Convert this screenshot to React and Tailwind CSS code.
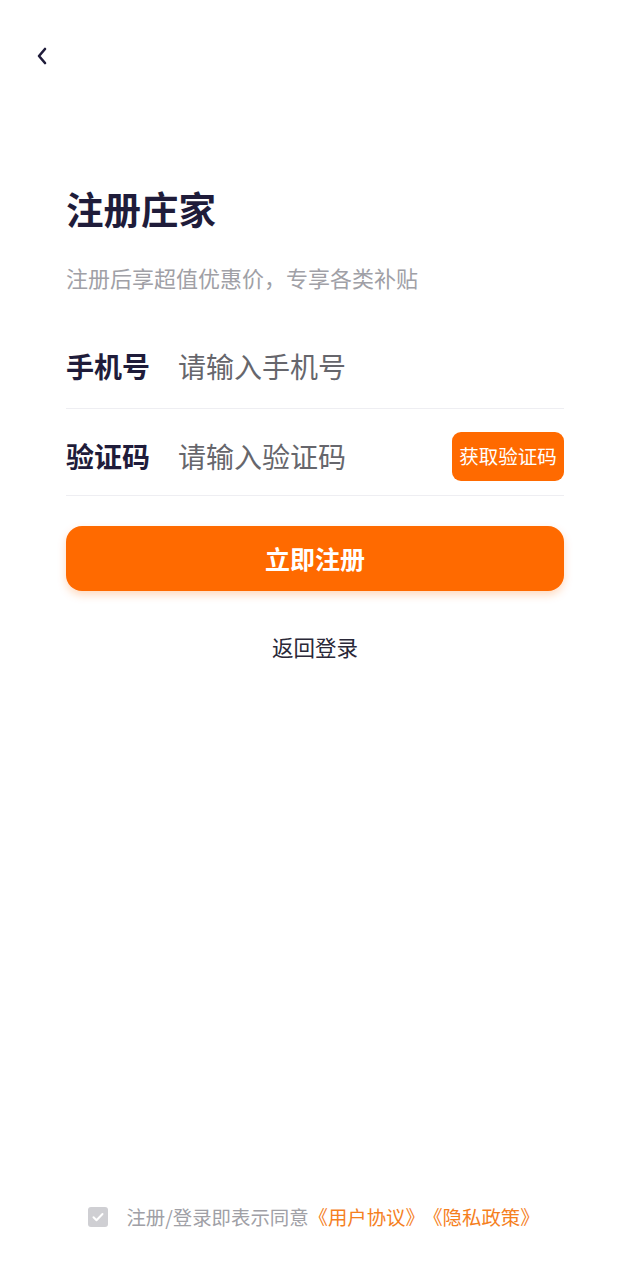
import React, { useState } from 'react';

const Register = () => {
  const [agreed, setAgreed] = useState(true);
  const [phone, setPhone] = useState('');
  const [code, setCode] = useState('');

  return (
    <div
      className="flex min-h-[1280px] w-full flex-col bg-white"
      style={{ fontFamily: '"Noto Sans CJK SC", "Noto Sans", sans-serif' }}
    >
      {/* Back */}
      <div className="px-[30px] pt-[42px]">
        <button className="flex h-[28px] w-[24px] items-center justify-center text-[#1f1c3a]">
          <svg width="14" height="20" viewBox="0 0 14 20" fill="none">
            <path d="M10 3L4 10l6 7" stroke="currentColor" strokeWidth="2.6" strokeLinecap="round" strokeLinejoin="round" />
          </svg>
        </button>
      </div>

      <div className="px-[66px]">
        <h1 className="mt-[112px] text-[37.5px] font-bold leading-[52px] text-[#1f1c3a]">注册庄家</h1>
        <p className="mt-[28px] text-[22px] leading-[30px] text-[#a0a0a6]">注册后享超值优惠价，专享各类补贴</p>

        {/* Phone */}
        <div className="mt-[35px] flex h-[82px] items-center border-b border-[#eeeef2] pb-[4px]">
          <span className="w-[112px] text-[28px] font-bold text-[#1f1c3a]">手机号</span>
          <input
            value={phone}
            onChange={(e) => setPhone(e.target.value)}
            placeholder="请输入手机号"
            className="min-w-0 flex-1 bg-transparent text-[28px] text-[#333] outline-none placeholder:text-[#66666c]"
          />
        </div>

        {/* Code */}
        <div className="flex h-[87px] items-center border-b border-[#eeeef2] pt-[8px]">
          <span className="w-[112px] text-[28px] font-bold text-[#1f1c3a]">验证码</span>
          <input
            value={code}
            onChange={(e) => setCode(e.target.value)}
            placeholder="请输入验证码"
            className="min-w-0 flex-1 bg-transparent text-[28px] text-[#333] outline-none placeholder:text-[#66666c]"
          />
          <button className="h-[49px] w-[112px] rounded-[9px] bg-[#ff6a00] text-[19.5px] text-white">
            获取验证码
          </button>
        </div>

        <button className="mt-[30px] h-[65px] w-full rounded-[16px] bg-[#ff6a00] text-[25px] font-bold text-white shadow-[0_4px_8px_rgba(255,106,0,0.25)]">
          立即注册
        </button>

        <div className="mt-[41px] text-center text-[21.5px] leading-[30px] text-[#2a2838]">返回登录</div>
      </div>

      {/* Agreement */}
      <div className="mt-auto flex items-center justify-center pb-[50px] pr-[2px]">
        <button
          onClick={() => setAgreed(!agreed)}
          className="mr-[18px] flex h-[20px] w-[20px] items-center justify-center rounded-[3px] bg-[#cfcfd3]"
        >
          {agreed && (
            <svg width="14" height="14" viewBox="0 0 14 14" fill="none">
              <path d="M2.5 7.2l3 3 6-6.2" stroke="white" strokeWidth="2" strokeLinecap="round" strokeLinejoin="round" />
            </svg>
          )}
        </button>
        <span className="text-[19.4px] leading-[26px] text-[#a0a0a6]">
          注册/登录即表示同意
          <span className="text-[#f5801e]">《用户协议》</span>
          <span className="ml-[8px] text-[#f5801e]">《隐私政策》</span>
        </span>
      </div>
    </div>
  );
};

export default Register;
